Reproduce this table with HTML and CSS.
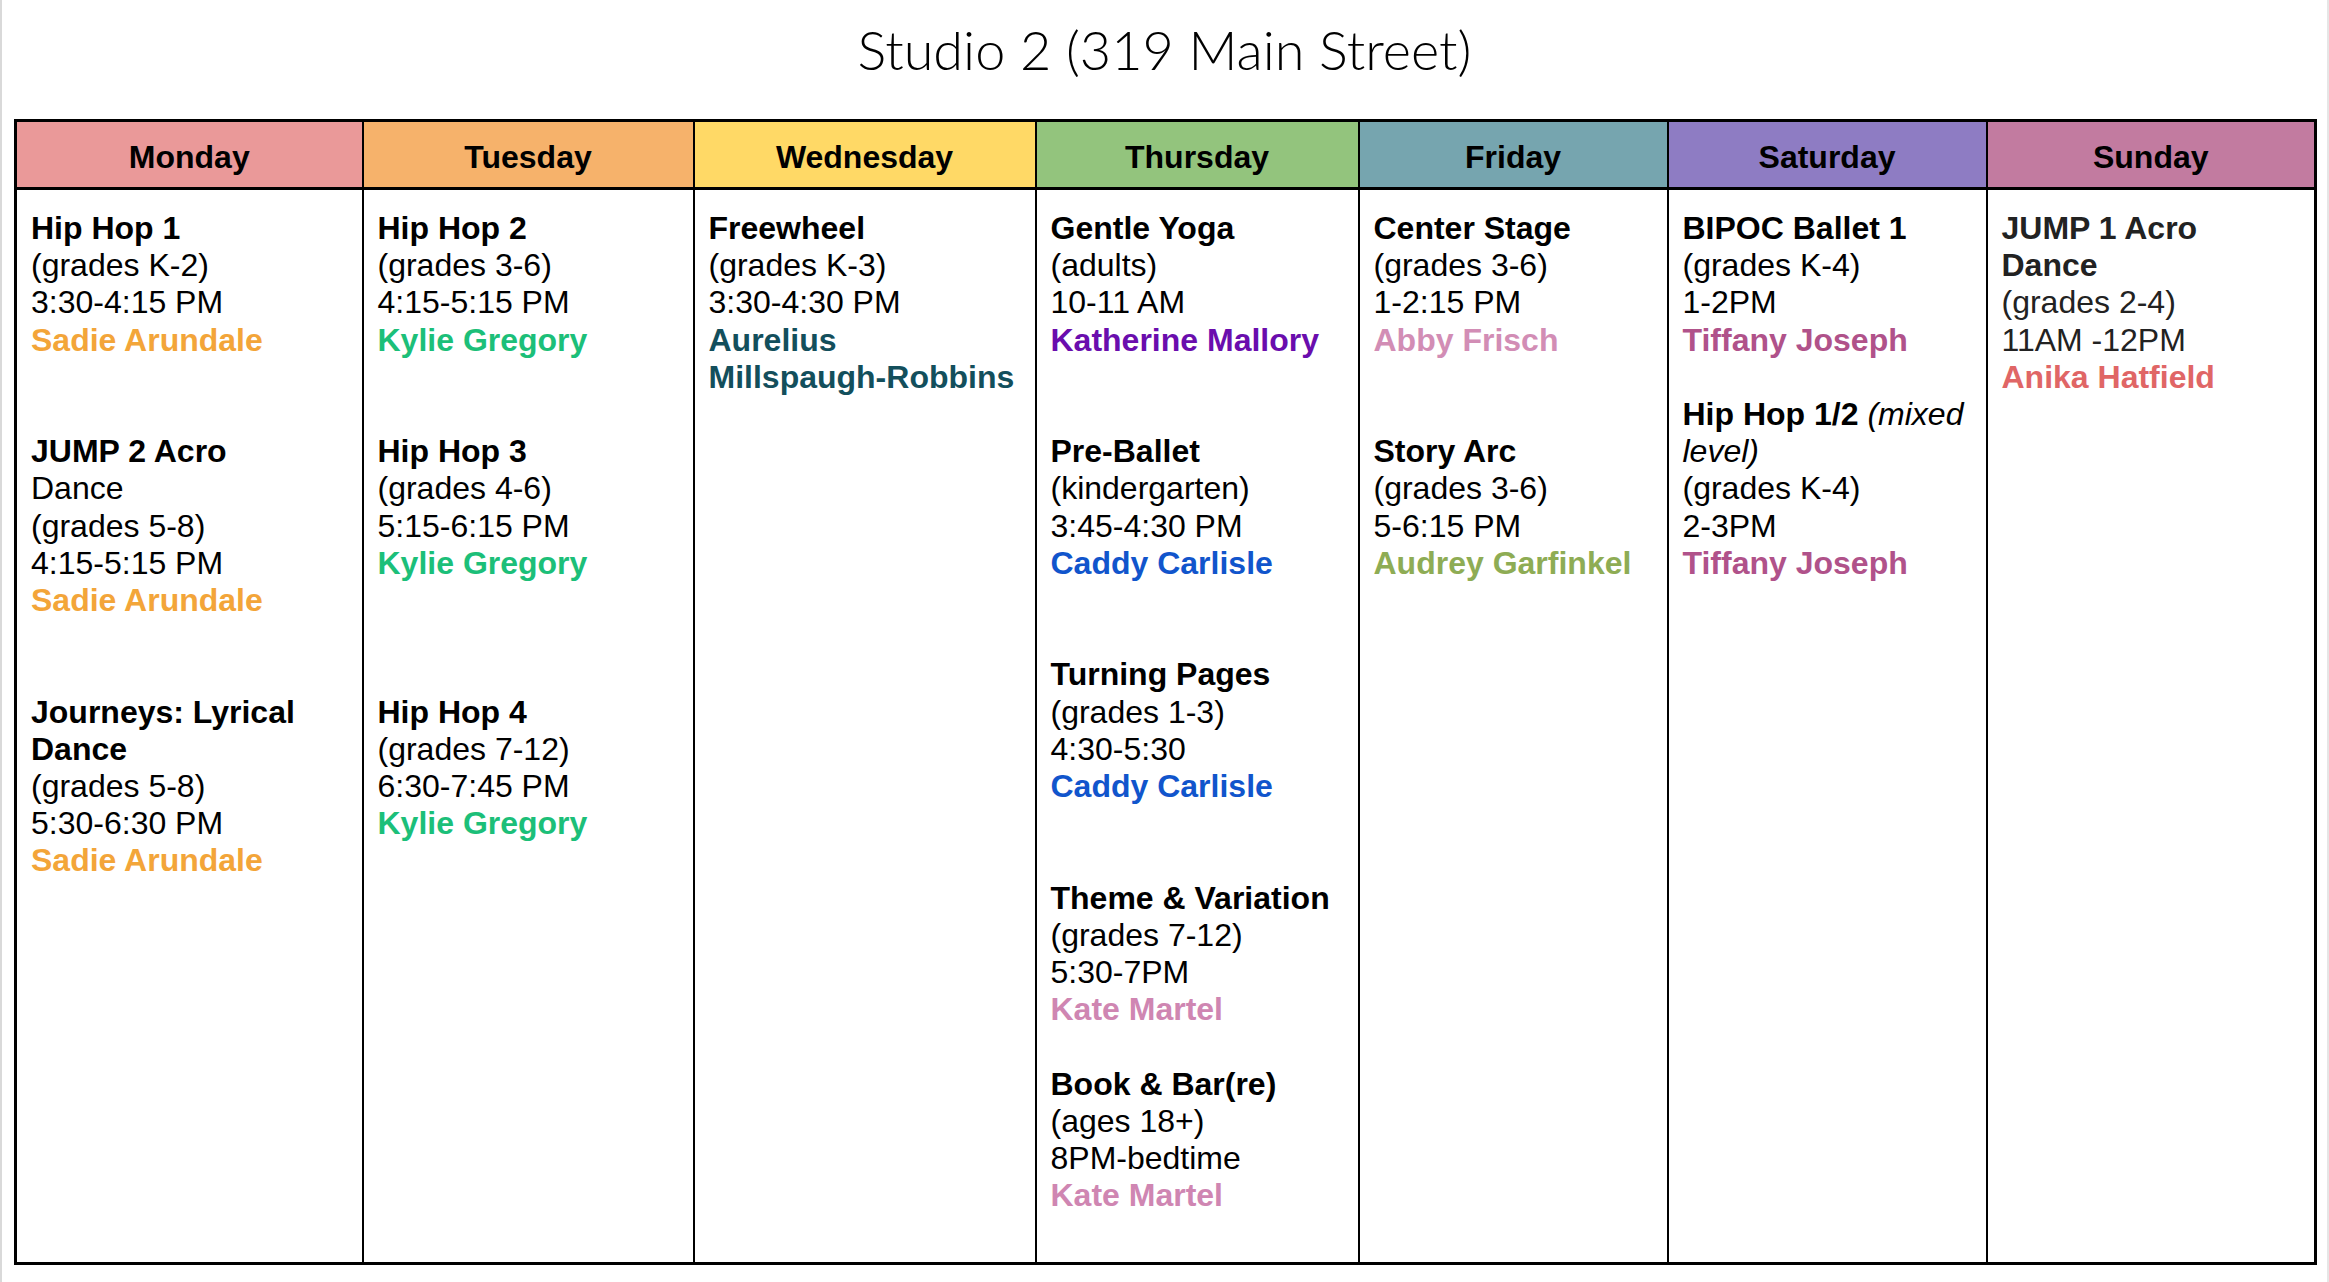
FILE: index.html
```html
<!DOCTYPE html>
<html>
<head>
<meta charset="utf-8">
<title>Studio 2 (319 Main Street)</title>
<link rel="stylesheet" href="styles.css">
</head>
<body>
<div class="page">
  <h1 class="title">Studio 2 (319 Main Street)</h1>
  <table class="schedule">
    <colgroup>
      <col class="c-mon"><col class="c-tue"><col class="c-wed"><col class="c-thu"><col class="c-fri"><col class="c-sat"><col class="c-sun">
    </colgroup>
    <thead>
      <tr>
        <th class="mon">Monday</th>
        <th class="tue">Tuesday</th>
        <th class="wed">Wednesday</th>
        <th class="thu">Thursday</th>
        <th class="fri">Friday</th>
        <th class="sat">Saturday</th>
        <th class="sun">Sunday</th>
      </tr>
    </thead>
    <tbody>
      <tr>
        <td>
          <div class="entry gap2">
            <div class="name">Hip Hop 1</div>
            <div>(grades K-2)</div>
            <div>3:30-4:15 PM</div>
            <div class="teacher sadie">Sadie Arundale</div>
          </div>
          <div class="entry gap2">
            <div class="name">JUMP 2 Acro</div>
            <div>Dance</div>
            <div>(grades 5-8)</div>
            <div>4:15-5:15 PM</div>
            <div class="teacher sadie">Sadie Arundale</div>
          </div>
          <div class="entry">
            <div class="name">Journeys: Lyrical Dance</div>
            <div>(grades 5-8)</div>
            <div>5:30-6:30 PM</div>
            <div class="teacher sadie">Sadie Arundale</div>
          </div>
        </td>
        <td>
          <div class="entry gap2">
            <div class="name">Hip Hop 2</div>
            <div>(grades 3-6)</div>
            <div>4:15-5:15 PM</div>
            <div class="teacher kylie">Kylie Gregory</div>
          </div>
          <div class="entry gap3">
            <div class="name">Hip Hop 3</div>
            <div>(grades 4-6)</div>
            <div>5:15-6:15 PM</div>
            <div class="teacher kylie">Kylie Gregory</div>
          </div>
          <div class="entry">
            <div class="name">Hip Hop 4</div>
            <div>(grades 7-12)</div>
            <div>6:30-7:45 PM</div>
            <div class="teacher kylie">Kylie Gregory</div>
          </div>
        </td>
        <td>
          <div class="entry">
            <div class="name">Freewheel</div>
            <div>(grades K-3)</div>
            <div>3:30-4:30 PM</div>
            <div class="teacher aurelius">Aurelius Millspaugh-Robbins</div>
          </div>
        </td>
        <td>
          <div class="entry gap2">
            <div class="name">Gentle Yoga</div>
            <div>(adults)</div>
            <div>10-11 AM</div>
            <div class="teacher katherine">Katherine Mallory</div>
          </div>
          <div class="entry gap2">
            <div class="name">Pre-Ballet</div>
            <div>(kindergarten)</div>
            <div>3:45-4:30 PM</div>
            <div class="teacher caddy">Caddy Carlisle</div>
          </div>
          <div class="entry gap2">
            <div class="name">Turning Pages</div>
            <div>(grades 1-3)</div>
            <div>4:30-5:30</div>
            <div class="teacher caddy">Caddy Carlisle</div>
          </div>
          <div class="entry gap1">
            <div class="name">Theme &amp; Variation</div>
            <div>(grades 7-12)</div>
            <div>5:30-7PM</div>
            <div class="teacher kate">Kate Martel</div>
          </div>
          <div class="entry">
            <div class="name">Book &amp; Bar(re)</div>
            <div>(ages 18+)</div>
            <div>8PM-bedtime</div>
            <div class="teacher kate">Kate Martel</div>
          </div>
        </td>
        <td>
          <div class="entry gap2">
            <div class="name">Center Stage</div>
            <div>(grades 3-6)</div>
            <div>1-2:15 PM</div>
            <div class="teacher abby">Abby Frisch</div>
          </div>
          <div class="entry">
            <div class="name">Story Arc</div>
            <div>(grades 3-6)</div>
            <div>5-6:15 PM</div>
            <div class="teacher audrey">Audrey Garfinkel</div>
          </div>
        </td>
        <td>
          <div class="entry gap1">
            <div class="name">BIPOC Ballet 1</div>
            <div>(grades K-4)</div>
            <div>1-2PM</div>
            <div class="teacher tiffany">Tiffany Joseph</div>
          </div>
          <div class="entry">
            <div><span class="name">Hip Hop 1/2</span> <em>(mixed level)</em></div>
            <div>(grades K-4)</div>
            <div>2-3PM</div>
            <div class="teacher tiffany">Tiffany Joseph</div>
          </div>
        </td>
        <td class="sunday">
          <div class="entry">
            <div class="name">JUMP 1 Acro Dance</div>
            <div>(grades 2-4)</div>
            <div>11AM -12PM</div>
            <div class="teacher anika">Anika Hatfield</div>
          </div>
        </td>
      </tr>
    </tbody>
  </table>
</div>
</body>
</html>
```

FILE: styles.css
```css
html, body {
  margin: 0;
  padding: 0;
  background: #ffffff;
}

.page {
  box-sizing: border-box;
  min-height: 1282px;
  width: 2329px;
  border-left: 2px solid #d9d9d9;
  border-right: 2px solid #e6e6e6;
  padding-left: 12px;
}

.title {
  box-sizing: border-box;
  height: 119px;
  margin: 0 0 0 -12px;
  padding-top: 17px;
  font-family: "Lato", "Noto Sans", sans-serif;
  font-weight: 300;
  font-size: 54px;
  line-height: 65px;
  color: #000;
  text-align: center;
}

.schedule {
  border-collapse: collapse;
  table-layout: fixed;
  width: 2302px;
  font-family: "Liberation Sans", Arial, sans-serif;
  font-size: 32px;
  color: #000;
  border: 3px solid #000;
}

.c-mon { width: 347px; }
.c-tue { width: 331px; }
.c-wed { width: 342px; }
.c-thu { width: 323px; }
.c-fri { width: 309px; }
.c-sat { width: 319px; }
.c-sun { width: 329px; }

.schedule th {
  height: 68px;
  padding: 6px 0 0 0;
  box-sizing: border-box;
  font-weight: bold;
  text-align: center;
  vertical-align: middle;
  border-left: 2px solid #000;
  border-right: 2px solid #000;
  border-bottom: 3px solid #000;
}

.mon { background: #ea9999; }
.tue { background: #f6b26b; }
.wed { background: #ffd966; }
.thu { background: #93c47d; }
.fri { background: #76a5af; }
.sat { background: #8e7cc3; }
.sun { background: #c27ba0; }

.schedule td {
  height: 1075px;
  box-sizing: border-box;
  vertical-align: top;
  padding: 20px 12px 0 14px;
  line-height: 37.2px;
  border-left: 2px solid #000;
  border-right: 2px solid #000;
}

.entry.gap1 { margin-bottom: 37.2px; }
.entry.gap2 { margin-bottom: 74.4px; }
.entry.gap3 { margin-bottom: 111.6px; }

.name { font-weight: bold; }
.teacher { font-weight: bold; }

.sunday { color: #222; }

.sadie { color: #f3a539; }
.kylie { color: #1cbf79; }
.aurelius { color: #134f5c; }
.katherine { color: #6a0dad; }
.caddy { color: #1155cc; }
.kate { color: #cf86b2; }
.abby { color: #d28db5; }
.audrey { color: #8eac54; }
.tiffany { color: #b0528a; }
.anika { color: #e06666; }
```
